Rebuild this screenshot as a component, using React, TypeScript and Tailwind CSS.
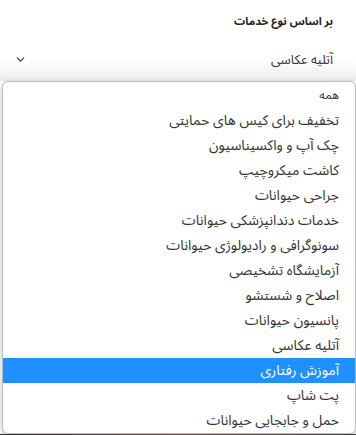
import { ChevronDown } from 'lucide-react';

const services = [
  'همه',
  'تخفیف برای کیس های حمایتی',
  'چک آپ و واکسیناسیون',
  'کاشت میکروچیپ',
  'جراحی حیوانات',
  'خدمات دندانپزشکی حیوانات',
  'سونوگرافی و رادیولوژی حیوانات',
  'آزمایشگاه تشخیصی',
  'اصلاح و شستشو',
  'پانسیون حیوانات',
  'آتلیه عکاسی',
  'آموزش رفتاری',
  'پت شاپ',
  'حمل و جابجایی حیوانات',
];

export default function App() {
  const active = 'آموزش رفتاری';

  return (
    <div
      dir="rtl"
      className="w-[356px] h-[435px] bg-white overflow-hidden flex flex-col"
      style={{ fontFamily: '"Noto Sans Arabic", "DejaVu Sans", sans-serif' }}
    >
      {/* Label */}
      <div className="h-[38px] flex items-center pr-[23px] pt-[6px] text-[11px] leading-[16px] font-bold text-[#222]">
        بر اساس نوع خدمات
      </div>

      {/* Select */}
      <div className="h-[43px] flex items-center justify-between pr-[23px] pl-[14px] bg-gradient-to-b from-white via-white to-[#ececec]">
        <span className="text-[13px] leading-[18px] text-[#333]">آتلیه عکاسی</span>
        <ChevronDown size={13} strokeWidth={2} className="text-[#333]" />
      </div>

      {/* Dropdown list */}
      <div className="w-[354px] ml-auto border border-[#bdbdbd] rounded-[6px] bg-white shadow-[0_2px_6px_rgba(0,0,0,0.25)] pt-[1px] overflow-hidden">
        {services.map((s) => (
          <div
            key={s}
            className={`h-[25px] flex items-center pr-[16px] leading-[18px] ${
              s === active ? 'bg-[#1e90ff] text-white' : 'text-[#333]'
            } ${s === 'همه' ? 'text-[12px]' : 'text-[14px]'}`}
          >
            {s}
          </div>
        ))}
      </div>
      <div className="flex-1 bg-gradient-to-r from-[#333] via-[#6b4a4a] to-[#444]" />
    </div>
  );
}
